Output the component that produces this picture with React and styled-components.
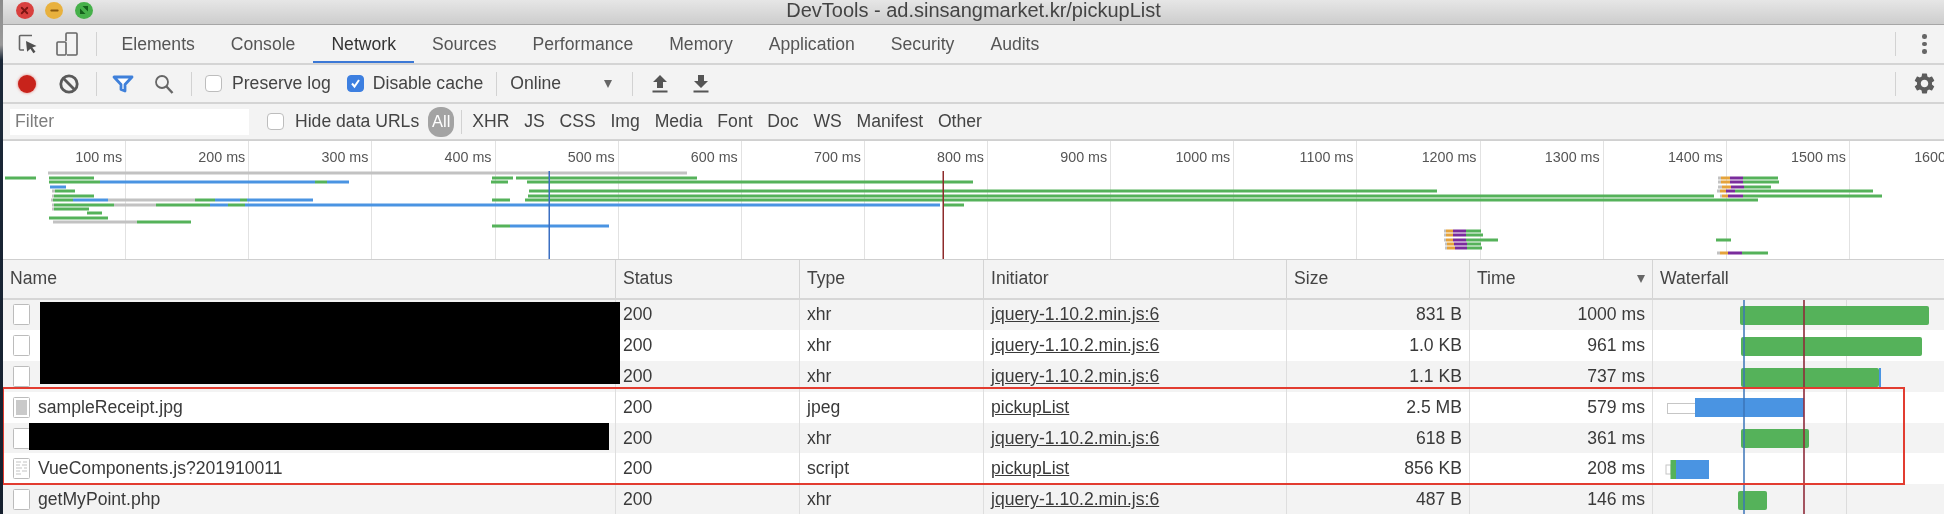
import styled, { createGlobalStyle } from 'styled-components';
import { X, Minus } from 'lucide-react';
import { MdSettings } from 'react-icons/md';

const GlobalStyle = createGlobalStyle`
  html, body {
    margin: 0;
    padding: 0;
    background: #f3f3f3;
  }
  * {
    box-sizing: border-box;
  }
`;

const Root = styled.div`
  width: 1944px;
  height: 514px;
  display: flex;
  overflow: hidden;
  font-family: "Liberation Sans", Arial, sans-serif;
  font-size: 17.6px;
  color: #333;
  filter: blur(0.6px);
`;

const Strip = styled.div`
  width: 3px;
  flex-shrink: 0;
  background: linear-gradient(#8a8a8a 0, #9a9a9a 45px, #1b2838 60px, #16202e 100%);
`;

const Main = styled.div`
  flex: 1;
  min-width: 0;
  display: flex;
  flex-direction: column;
`;

const TitleBar = styled.div`
  height: 25px;
  padding-bottom: 4px;
  display: grid;
  grid-template-columns: 1fr auto 1fr;
  align-items: center;
  background: linear-gradient(#e6e6e6, #cdcdcd);
  border-bottom: 1px solid #a6a6a6;
`;

const Lights = styled.div`
  display: flex;
  gap: 11.5px;
  padding-left: 12.5px;
`;

const Light = styled.span`
  width: 18px;
  height: 17px;
  border-radius: 50%;
  display: flex;
  align-items: center;
  justify-content: center;
  background: ${props => props.$color};
`;

const Title = styled.div`
  font-size: 20px;
  line-height: 20px;
  color: #444;
`;

const Bar = styled.div`
  height: ${props => props.$height}px;
  flex-shrink: 0;
  display: flex;
  align-items: center;
  background: #f3f3f3;
  border-bottom: ${props => props.$border || 1}px solid #d4d4d4;
  padding-left: ${props => props.$pad || 0}px;
`;

const IconSlot = styled.span`
  width: ${props => props.$width}px;
  height: 24px;
  flex-shrink: 0;
  display: flex;
  align-items: center;
  justify-content: center;
  margin-left: ${props => props.$left || 0}px;
`;

const Separator = styled.span`
  width: 1px;
  height: 24px;
  flex-shrink: 0;
  background: #d2d2d2;
  margin: ${props => props.$margin || '0'};
`;

const Tabs = styled.div`
  display: flex;
  height: 100%;
`;

const Tab = styled.div`
  padding: 0 18px;
  display: flex;
  align-items: center;
  color: ${props => (props.$active ? '#333' : '#555')};
  box-shadow: ${props => (props.$active ? 'inset 0 -2px 0 #3b78d6' : 'none')};
`;

const RightSlot = styled.div`
  margin-left: auto;
  width: 49px;
  display: flex;
  align-items: center;
`;

const Dots = styled.span`
  display: flex;
  flex-direction: column;
  gap: 3px;
  margin-left: 26px;
  i {
    width: 4.5px;
    height: 4.5px;
    border-radius: 50%;
    background: #666;
  }
`;

const GearSlot = styled.span`
  display: flex;
  margin-left: 16px;
  color: #5c5c5c;
`;

const RecordDot = styled.span`
  width: 18px;
  height: 18px;
  border-radius: 50%;
  background: #c8231b;
  box-shadow: 0 0 3px rgba(220, 60, 50, 0.7);
`;

const Check = styled.span`
  width: 17px;
  height: 17px;
  flex-shrink: 0;
  border-radius: 4px;
  display: flex;
  align-items: center;
  justify-content: center;
  background: ${props => (props.$checked ? '#3d7fe0' : '#fff')};
  border: 1px solid ${props => (props.$checked ? '#3d7fe0' : '#bdbdbd')};
  margin: ${props => props.$margin || '0'};
`;

const Label = styled.span`
  white-space: nowrap;
  color: #444;
  margin-right: ${props => props.$right || 0}px;
`;

const Caret = styled.span`
  width: 0;
  height: 0;
  border-left: 4.5px solid transparent;
  border-right: 4.5px solid transparent;
  border-top: 8px solid #666;
  margin: ${props => props.$margin || '0'};
`;

const FilterInput = styled.div`
  width: 239px;
  height: 26px;
  margin: 0 18px 0 7px;
  padding-left: 5px;
  flex-shrink: 0;
  display: flex;
  align-items: center;
  background: #fff;
  color: #7d7d7d;
`;

const AllPill = styled.span`
  width: 26px;
  height: 30px;
  margin-left: 9px;
  border-radius: 12px;
  display: flex;
  align-items: center;
  justify-content: center;
  background: #a3a3a3;
  color: #fff;
  font-size: 16.5px;
`;

const TypeFilters = styled.div`
  display: flex;
  gap: 14.8px;
  color: #444;
`;

const Overview = styled.div`
  position: relative;
  height: 120px;
  flex-shrink: 0;
  display: flex;
  overflow: hidden;
  background: #fff;
  border-top: 1px solid #d0d0d0;
  border-bottom: 1px solid #cfcfcf;
`;

const Tick = styled.div`
  width: 123.14px;
  flex-shrink: 0;
  padding: 8px 3px 0 0;
  text-align: right;
  font-size: 14.3px;
  line-height: 16px;
  color: #555;
  white-space: nowrap;
  border-right: 1px solid #e2e2e2;
`;

const OverviewChart = styled.svg`
  position: absolute;
  left: 0;
  top: -1px;
`;

const Table = styled.div`
  position: relative;
  flex: 1;
  min-height: 0;
  overflow: hidden;
`;

const columns = '613px 184px 184px 303px 183px 183px 1fr';

const HeaderRow = styled.div`
  height: 39.5px;
  display: grid;
  grid-template-columns: ${columns};
  background: #f3f3f3;
  border-bottom: 2px solid #d6d6d6;
`;

const HeaderCell = styled.div`
  padding: 0 7px;
  display: flex;
  align-items: center;
  justify-content: space-between;
  border-right: 1px solid #d4d4d4;
  color: #444;
  &:last-child {
    border-right: none;
  }
`;

const Row = styled.div`
  height: 30.8px;
  display: grid;
  grid-template-columns: ${columns};
  background: ${props => (props.$shaded ? '#f3f3f3' : '#fff')};
`;

const Cell = styled.div`
  padding: 0 7px;
  display: flex;
  align-items: center;
  justify-content: ${props => (props.$right ? 'flex-end' : 'flex-start')};
  white-space: nowrap;
  color: #3a3a3a;
  border-right: 1px solid #dedede;
  &:last-child {
    border-right: none;
  }
`;

const NameCell = styled(Cell)`
  padding-left: 10px;
  gap: 8px;
`;

const InitiatorLink = styled.span`
  text-decoration: underline;
`;

const FileSvg = styled.svg`
  flex-shrink: 0;
`;

const Redaction = styled.div`
  position: absolute;
  left: ${props => props.$left}px;
  top: ${props => props.$top}px;
  width: ${props => props.$width}px;
  height: ${props => props.$height}px;
  background: #000;
`;

const Highlight = styled.div`
  position: absolute;
  left: -1px;
  top: 127px;
  width: 1903px;
  height: 98px;
  border: 2px solid #e23c30;
`;

const WaterfallChart = styled.svg`
  position: absolute;
  right: 0;
  top: 0;
`;

const GREEN = '#55b25a';
const BLUE = '#4a94e2';
const GREY = '#c2c2c2';
const ORANGE = '#e5a33b';
const PURPLE = '#7a2c9c';

const TICKS = ['100 ms', '200 ms', '300 ms', '400 ms', '500 ms', '600 ms', '700 ms', '800 ms', '900 ms', '1000 ms', '1100 ms', '1200 ms', '1300 ms', '1400 ms', '1500 ms', '1600 ms'];

// y, then runs of [x1, x2, colour], all in page pixels
const OVERVIEW_BARS = [
  [173, [48, 687, GREY]],
  [178, [5, 36, GREEN], [49, 94, GREEN], [492, 513, GREEN], [516, 697, GREEN]],
  [182, [49, 100, GREEN], [100, 315, BLUE], [315, 327, GREEN], [327, 349, BLUE], [491, 508, GREEN], [527, 973, GREEN]],
  [187, [50, 66, BLUE]],
  [191, [52, 55, GREY], [55, 75, GREEN], [529, 1437, GREEN]],
  [196, [52, 54, GREY], [54, 94, GREEN], [528, 1714, GREEN]],
  [200, [51, 53, GREY], [53, 73, GREEN], [73, 108, BLUE], [108, 195, GREY], [195, 215, GREEN], [215, 240, BLUE], [240, 247, GREEN], [247, 313, BLUE], [492, 510, GREEN], [525, 1758, GREEN]],
  [205, [52, 54, GREY], [54, 114, GREEN], [114, 156, GREY], [156, 210, GREEN], [210, 228, BLUE], [228, 245, GREEN], [245, 940, BLUE], [944, 964, GREEN]],
  [209, [52, 54, GREY], [54, 89, GREEN]],
  [213, [87, 102, GREEN]],
  [218, [49, 108, GREEN]],
  [222, [53, 137, GREY], [137, 191, GREEN]],
  [226, [492, 510, GREEN], [510, 609, BLUE]],
  [178, [1718, 1721, GREY], [1721, 1730, ORANGE], [1730, 1743, PURPLE], [1743, 1778, GREEN]],
  [182, [1718, 1721, GREY], [1721, 1730, ORANGE], [1730, 1743, PURPLE], [1743, 1779, GREEN]],
  [187, [1718, 1722, GREY], [1722, 1731, ORANGE], [1731, 1744, PURPLE], [1744, 1771, GREEN]],
  [191, [1717, 1720, GREY], [1720, 1726, ORANGE], [1726, 1735, PURPLE], [1735, 1873, GREEN]],
  [196, [1720, 1722, GREY], [1722, 1728, ORANGE], [1728, 1743, PURPLE], [1743, 1882, GREEN]],
  [231, [1444, 1446, GREY], [1446, 1453, ORANGE], [1453, 1466, PURPLE], [1466, 1481, GREEN]],
  [235, [1444, 1446, GREY], [1446, 1453, ORANGE], [1453, 1466, PURPLE], [1466, 1483, GREEN]],
  [240, [1444, 1446, GREY], [1446, 1453, ORANGE], [1453, 1466, PURPLE], [1466, 1498, GREEN], [1716, 1731, GREEN]],
  [244, [1445, 1447, GREY], [1447, 1454, ORANGE], [1454, 1467, PURPLE], [1467, 1481, GREEN]],
  [248, [1445, 1447, GREY], [1447, 1455, ORANGE], [1455, 1467, PURPLE], [1467, 1482, GREEN]],
  [253, [1717, 1720, GREY], [1720, 1728, ORANGE], [1728, 1742, PURPLE], [1742, 1768, GREEN]],
];

const ROWS = [
  { icon: 'doc', status: '200', type: 'xhr', initiator: 'jquery-1.10.2.min.js:6', size: '831 B', time: '1000 ms' },
  { icon: 'doc', status: '200', type: 'xhr', initiator: 'jquery-1.10.2.min.js:6', size: '1.0 KB', time: '961 ms' },
  { icon: 'doc', status: '200', type: 'xhr', initiator: 'jquery-1.10.2.min.js:6', size: '1.1 KB', time: '737 ms' },
  { icon: 'image', name: 'sampleReceipt.jpg', status: '200', type: 'jpeg', initiator: 'pickupList', size: '2.5 MB', time: '579 ms' },
  { icon: 'doc', status: '200', type: 'xhr', initiator: 'jquery-1.10.2.min.js:6', size: '618 B', time: '361 ms' },
  { icon: 'script', name: 'VueComponents.js?201910011', status: '200', type: 'script', initiator: 'pickupList', size: '856 KB', time: '208 ms' },
  { icon: 'doc', name: 'getMyPoint.php', status: '200', type: 'xhr', initiator: 'jquery-1.10.2.min.js:6', size: '487 B', time: '146 ms' },
];

function FileIcon({ kind }) {
  return (
    <FileSvg width="17" height="21" viewBox="0 0 17 21">
      <rect x="0.5" y="0.5" width="16" height="20" rx="1" fill="#fff" stroke="#bcbcbc" />
      {kind === 'image' && <rect x="3" y="3" width="11" height="15" fill="#c9c9c9" />}
      {kind === 'script' && (
        <path d="M3 4h5M10 4h4M3 7h4M9 7h5M3 10h6M11 10h3M3 13h4M9 13h5M3 16h5" stroke="#c4c4c4" strokeWidth="1.2" />
      )}
    </FileSvg>
  );
}

function InspectIcon() {
  return (
    <svg width="20" height="20" viewBox="0 0 20 20" fill="none">
      <path d="M14 1.5H2.5a1 1 0 0 0-1 1V15a1 1 0 0 0 1 1H6" stroke="#666" strokeWidth="1.6" />
      <path d="M8 7l10.5 5-4.2 1.4 3.2 4.4-2.1 1.4-3-4.4-3.3 3z" fill="#4f4f4f" />
    </svg>
  );
}

function DeviceIcon() {
  return (
    <svg width="22" height="24" viewBox="0 0 22 24" fill="none" stroke="#666" strokeWidth="1.6">
      <path d="M10 9V2a1 1 0 0 1 1-1h9a1 1 0 0 1 1 1v20a1 1 0 0 1-1 1h-9" />
      <rect x="1" y="10" width="9" height="13" rx="1" />
    </svg>
  );
}

function ClearIcon() {
  return (
    <svg width="20" height="20" viewBox="0 0 20 20" fill="none" stroke="#5a5a5a" strokeWidth="2.8">
      <circle cx="10" cy="10" r="8.2" />
      <path d="M4.3 4.3l11.4 11.4" />
    </svg>
  );
}

function FunnelIcon() {
  return (
    <svg width="22" height="18" viewBox="0 0 22 18" fill="#fff" stroke="#3f80da" strokeWidth="2.8" strokeLinejoin="round">
      <path d="M2 2h18l-7 7.5V16l-4-1.5V9.5z" />
    </svg>
  );
}

function SearchIcon() {
  return (
    <svg width="20" height="20" viewBox="0 0 20 20" fill="none" stroke="#666" strokeWidth="1.8">
      <circle cx="8" cy="8" r="6" />
      <path d="M12.5 12.5l6 6.5" strokeWidth="2.4" />
    </svg>
  );
}

function ArrowIcon({ up }) {
  return (
    <svg width="16" height="18" viewBox="0 0 16 18" fill="#555">
      <path d={up ? 'M8 0l7 7h-4v6H5V7H1z' : 'M5 0h6v6h4l-7 7-7-7h4z'} />
      <rect x="0.5" y="15.5" width="15" height="2" />
    </svg>
  );
}

function OverviewBars() {
  return (
    <OverviewChart width="1941" height="120" viewBox="3 140 1941 120">
      {OVERVIEW_BARS.map(([y, ...runs]) =>
        runs.map(([x1, x2, color]) => (
          <rect key={`${y}-${x1}`} x={x1} y={y - 1.5} width={x2 - x1} height="3" fill={color} />
        ))
      )}
      <rect x="548.5" y="171" width="1.5" height="88" fill="#3b6fc2" />
      <rect x="942.5" y="171" width="1.5" height="88" fill="#8e2b2b" />
    </OverviewChart>
  );
}

function WaterfallBars() {
  return (
    <WaterfallChart width="291" height="254" viewBox="1653 260 291 254">
      <rect x="1846" y="300" width="1" height="214" fill="#dcdcdc" />
      <rect x="1740" y="306" width="189" height="19" rx="2" fill={GREEN} />
      <rect x="1741" y="337" width="181" height="19" rx="2" fill={GREEN} />
      <rect x="1741" y="368" width="138" height="19" rx="2" fill={GREEN} />
      <rect x="1879" y="368" width="2" height="19" fill={BLUE} />
      <rect x="1667.5" y="403.5" width="28" height="10" fill="#fff" stroke="#c6c6c6" />
      <rect x="1695" y="398" width="109" height="19" fill={BLUE} />
      <rect x="1741" y="429" width="68" height="19" rx="2" fill={GREEN} />
      <rect x="1666" y="465" width="5" height="9" fill="#fff" stroke="#c6c6c6" />
      <rect x="1670.5" y="460" width="5.5" height="19" fill={GREEN} />
      <rect x="1676" y="460" width="33" height="19" fill={BLUE} />
      <rect x="1738" y="491" width="29" height="19" rx="2" fill={GREEN} />
      <rect x="1743" y="300" width="2" height="214" fill="#3b74b8" fillOpacity="0.75" />
      <rect x="1803" y="300" width="2" height="214" fill="#8e2b3a" fillOpacity="0.8" />
    </WaterfallChart>
  );
}

function App() {
  return (
    <Root>
      <GlobalStyle />
      <Strip />
      <Main>
        <TitleBar>
          <Lights>
            <Light $color="#d9403e"><X size={11} strokeWidth={4} color="#7c1512" /></Light>
            <Light $color="#e8b13e"><Minus size={11} strokeWidth={4} color="#8a5a10" /></Light>
            <Light $color="#46b04a">
              <svg width="10" height="10" viewBox="0 0 10 10" fill="#14601c">
                <path d="M1 9V3.5L6.5 9zM9 1v5.5L3.5 1z" />
              </svg>
            </Light>
          </Lights>
          <Title>DevTools - ad.sinsangmarket.kr/pickupList</Title>
          <span />
        </TitleBar>

        <Bar $height={40} $border={2} $pad={5.5}>
          <IconSlot $width={39}><InspectIcon /></IconSlot>
          <IconSlot $width={39}><DeviceIcon /></IconSlot>
          <Separator $margin="0 7px 0 9px" />
          <Tabs>
            <Tab>Elements</Tab>
            <Tab>Console</Tab>
            <Tab $active>Network</Tab>
            <Tab>Sources</Tab>
            <Tab>Performance</Tab>
            <Tab>Memory</Tab>
            <Tab>Application</Tab>
            <Tab>Security</Tab>
            <Tab>Audits</Tab>
          </Tabs>
          <RightSlot>
            <Separator />
            <Dots><i /><i /><i /></Dots>
          </RightSlot>
        </Bar>

        <Bar $height={39} $border={2} $pad={3}>
          <IconSlot $width={42}><RecordDot /></IconSlot>
          <IconSlot $width={42}><ClearIcon /></IconSlot>
          <Separator $margin="0 6px 0 5.5px" />
          <IconSlot $width={41}><FunnelIcon /></IconSlot>
          <IconSlot $width={41}><SearchIcon /></IconSlot>
          <Separator $margin="0 0 0 6.5px" />
          <Check $margin="0 10px 0 13px" />
          <Label $right={16}>Preserve log</Label>
          <Check $checked $margin="0 9px 0 0">
            <svg width="11" height="11" viewBox="0 0 11 11" fill="none" stroke="#fff" strokeWidth="2">
              <path d="M2 5.5l2.5 3L9 2" />
            </svg>
          </Check>
          <Label>Disable cache</Label>
          <Separator $margin="0 13px 0 13px" />
          <Label>Online</Label>
          <Caret $margin="0 0 0 43px" />
          <Separator $margin="0 0 0 20px" />
          <IconSlot $width={16} $left={19}><ArrowIcon up /></IconSlot>
          <IconSlot $width={16} $left={25}><ArrowIcon /></IconSlot>
          <RightSlot>
            <Separator />
            <GearSlot><MdSettings size={25} /></GearSlot>
          </RightSlot>
        </Bar>

        <Bar $height={36} $border={1}>
          <FilterInput>Filter</FilterInput>
          <Check $margin="0 11px 0 0" />
          <Label>Hide data URLs</Label>
          <AllPill>All</AllPill>
          <Separator $margin="0 10px 0 7px" />
          <TypeFilters>
            <span>XHR</span>
            <span>JS</span>
            <span>CSS</span>
            <span>Img</span>
            <span>Media</span>
            <span>Font</span>
            <span>Doc</span>
            <span>WS</span>
            <span>Manifest</span>
            <span>Other</span>
          </TypeFilters>
        </Bar>

        <Overview>
          {TICKS.map(t => <Tick key={t}>{t}</Tick>)}
          <OverviewBars />
        </Overview>

        <Table>
          <HeaderRow>
            <HeaderCell>Name</HeaderCell>
            <HeaderCell>Status</HeaderCell>
            <HeaderCell>Type</HeaderCell>
            <HeaderCell>Initiator</HeaderCell>
            <HeaderCell>Size</HeaderCell>
            <HeaderCell>
              Time
              <Caret />
            </HeaderCell>
            <HeaderCell>Waterfall</HeaderCell>
          </HeaderRow>
          {ROWS.map((row, i) => (
            <Row key={i} $shaded={i % 2 === 0}>
              <NameCell>
                <FileIcon kind={row.icon} />
                {row.name}
              </NameCell>
              <Cell>{row.status}</Cell>
              <Cell>{row.type}</Cell>
              <Cell><InitiatorLink>{row.initiator}</InitiatorLink></Cell>
              <Cell $right>{row.size}</Cell>
              <Cell $right>{row.time}</Cell>
              <Cell />
            </Row>
          ))}
          <WaterfallBars />
          <Redaction $left={37} $top={42} $width={580} $height={82} />
          <Redaction $left={25.5} $top={163} $width={580} $height={27} />
          <Highlight />
        </Table>
      </Main>
    </Root>
  );
}

export default App;
